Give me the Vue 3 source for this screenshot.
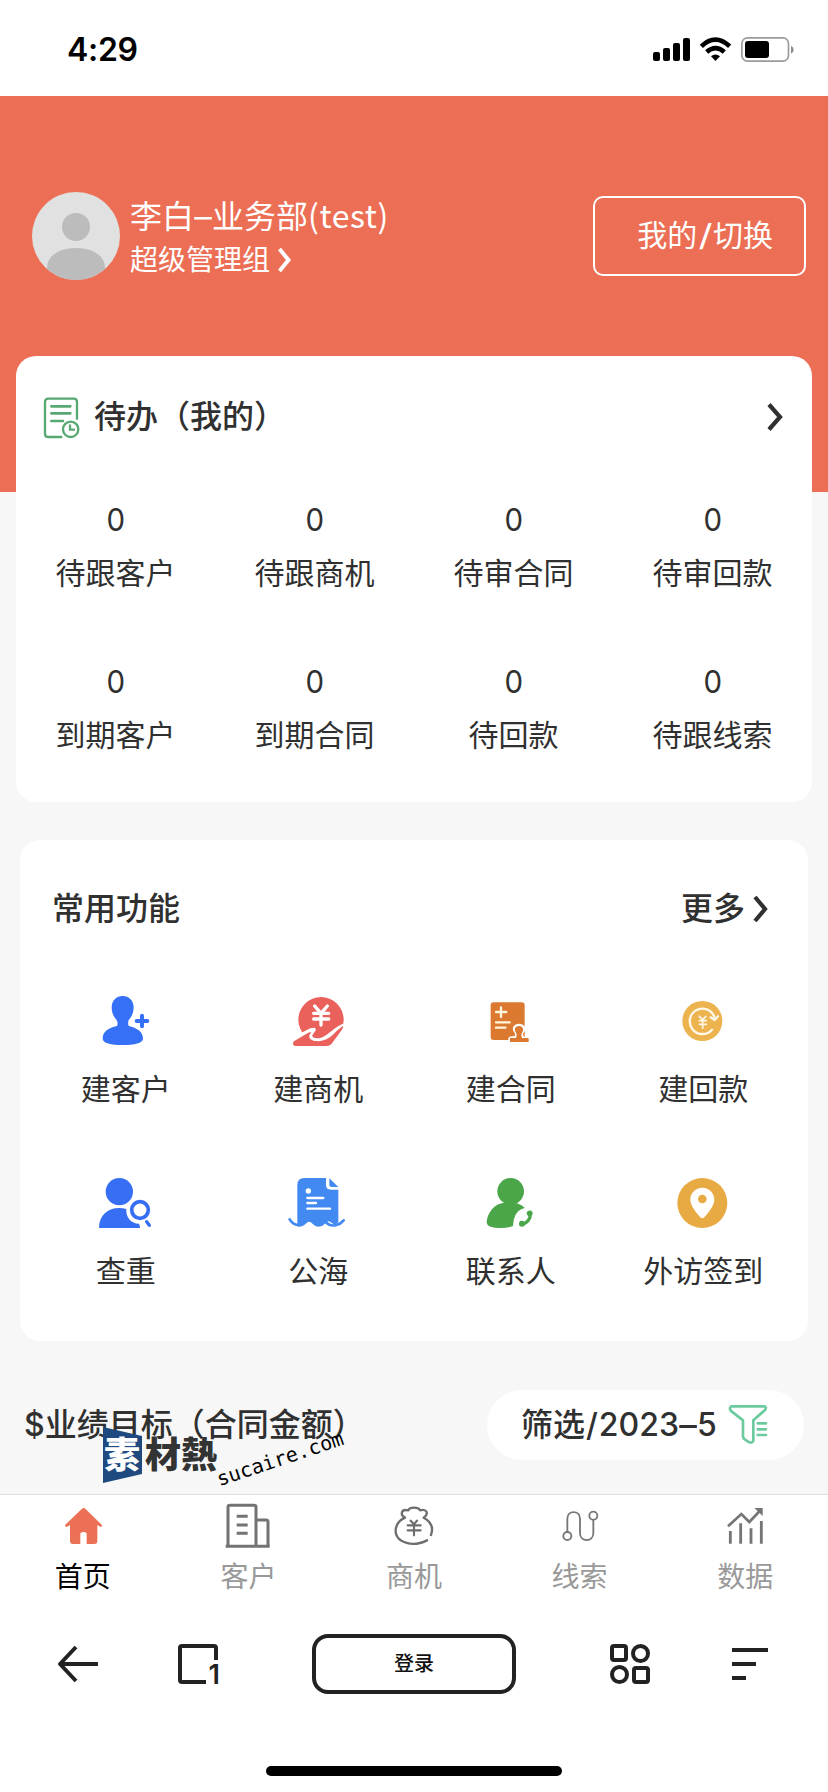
<script setup>
const todos = [
  { count: 0, label: '待跟客户' },
  { count: 0, label: '待跟商机' },
  { count: 0, label: '待审合同' },
  { count: 0, label: '待审回款' },
  { count: 0, label: '到期客户' },
  { count: 0, label: '到期合同' },
  { count: 0, label: '待回款' },
  { count: 0, label: '待跟线索' },
]
</script>

<template>
  <div class="screen">
    <div class="status">
      <span class="time">4:29</span>
      <svg class="status-icons" viewBox="0 0 510 180">
        <rect x="39" y="96" width="21" height="27" rx="6" />
        <rect x="69" y="84" width="21" height="39" rx="6" />
        <rect x="99" y="69" width="21" height="54" rx="6" />
        <rect x="129" y="54" width="21" height="69" rx="6" />
        <g fill="none" stroke="#000" stroke-width="14">
          <path d="M184 79Q226 39 269 79" />
          <path d="M200 96Q226 73 253 96" />
        </g>
        <path d="M213 109Q226 98 240 109L226.500 123Z" />
        <rect x="305.500" y="53.500" width="140" height="70" rx="17" fill="none" stroke="#9b9b9b" stroke-width="5" />
        <rect x="315" y="63" width="72" height="51" rx="9" />
        <path d="M453 77Q461 81 461 89T453 101Z" fill="#8c8c8c" />
      </svg>
    </div>

    <header class="header">
      <svg class="avatar" viewBox="0 0 88 88">
        <defs><clipPath id="avatar-clip"><circle cx="44" cy="44" r="44" /></clipPath></defs>
        <g clip-path="url(#avatar-clip)">
          <rect width="88" height="88" fill="#e1e1e1" />
          <circle cx="44" cy="35" r="14" fill="#bcbcbc" />
          <path d="M15 90V76C15 64 27 56 44 56S73 64 73 76V90Z" fill="#bcbcbc" />
        </g>
      </svg>
      <div class="who">
        <div class="name">李白<span class="dash">–</span>业务部<span class="latin">(test)</span></div>
        <div class="role">
          超级管理组
          <svg class="chev-role" viewBox="0 0 14 26"><path d="M2.500 2L11.500 13L2.500 24" /></svg>
        </div>
      </div>
      <div class="switch">我的<span class="slash">/</span>切换</div>
    </header>

    <section class="card todo">
      <div class="todo-head">
        <svg class="todo-icon" viewBox="120 156 132 144" fill="none" stroke="#58a873" stroke-width="7" stroke-linecap="round">
          <path d="M231 233V183Q231 173 221 173H145Q135 173 135 183V278Q135 288 145 288H184" />
          <path d="M154 196H211M154 217H211M154 240H189" stroke-width="8" />
          <circle cx="212" cy="265" r="23" />
          <path d="M210 253V266H222" />
        </svg>
        <span class="title">待办（我的）</span>
        <svg class="chev-todo" viewBox="0 0 18 30"><path d="M3 2.500L14 15L3 27.500" /></svg>
      </div>
      <div class="todo-grid">
        <div v-for="item in todos" :key="item.label" class="todo-cell">
          <span class="num">{{ item.count }}</span>
          <span class="label">{{ item.label }}</span>
        </div>
      </div>
    </section>

    <section class="card funcs">
      <div class="funcs-head">
        <span class="title">常用功能</span>
        <span class="title more">更多</span>
        <svg class="chev-more" viewBox="0 0 16 28"><path d="M3 2L13 14L3 26" /></svg>
      </div>
      <div class="func-grid">
        <div class="func">
          <svg viewBox="99 57 192 192" fill="#3670f6">
            <path d="M188 78C207 78 221 92 221 112C221 128 216 140 206 150Q203 161 206 168C230 174 249 184 249 206C249 219 224 225 188 225S128 219 128 206C128 184 146 174 171 168Q175 160 170 150C160 140 155 128 155 112C155 92 169 78 188 78Z" />
            <path d="M246 137V169M230 153H262" stroke="#3670f6" stroke-width="12" stroke-linecap="round" />
          </svg>
          <span class="label">建客户</span>
        </div>
        <div class="func">
          <svg viewBox="677 57 192 192" fill="#ea615b">
            <circle cx="782" cy="149" r="68" />
            <path d="M694 203L750 175Q769 169 766 181L756 196Q754 206 777 205C803 201 824 164 858 159V232H694Z" fill="#fff" />
            <path d="M702 213L744 188Q757 183 750 191C742 199 749 211 765 213C793 216 812 202 829 183Q840 173 848 168Q850 171 844 180L814 221Q808 228 799 228H706Q698 228 698 220Q698 216 702 213Z" />
            <path d="M763 108L782 130L801 108M782 130V165M760 130H805M760 147H805" fill="none" stroke="#fff" stroke-width="10" stroke-linecap="round" />
          </svg>
          <span class="label">建商机</span>
        </div>
        <div class="func">
          <svg viewBox="115 57 192 192" fill="#dc7930">
            <rect x="153" y="97" width="102" height="113" rx="9" />
            <path d="M184 112V141M169 126H200M169 157H210M169 173H197" stroke="#fff4dc" stroke-width="7" stroke-linecap="round" />
            <path d="M206 222V205Q208 199 216 199H224Q229 193 223 186C214 173 224 161 238 161S264 173 253 187Q247 193 253 200H272V222Z" fill="#fff" />
            <path d="M211 204H229Q234 195 229 188C222 178 227 168 238 168S254 178 247 188Q242 195 247 204H263Q267 204 267 208V216H211Z" />
          </svg>
          <span class="label">建合同</span>
        </div>
        <div class="func">
          <svg viewBox="692 57 192 192">
            <circle cx="786" cy="153" r="60" fill="#edb34f" />
            <g fill="none" stroke="#fff8e8" stroke-width="7" stroke-linecap="round" stroke-linejoin="round">
              <path d="M815 179A38 38 0 1 1 822 141" />
              <path d="M811 142L823 150L833 139" />
              <path d="M777 139L787 149L797 139M787 149V175M777 152H798M777 163H798" stroke-width="5" />
            </g>
          </svg>
          <span class="label">建回款</span>
        </div>
        <div class="func">
          <svg viewBox="99 63 192 192" fill="#376ff4">
            <circle cx="178" cy="125" r="41" />
            <path d="M117 234C117 195 144 174 177 174Q189 174 199 177C197 202 213 221 237 221Q240 227 240 234Z" />
            <circle cx="240" cy="180" r="25" fill="none" stroke="#376ff4" stroke-width="11" />
            <path d="M260 215L268 226" stroke="#376ff4" stroke-width="10" stroke-linecap="round" />
          </svg>
          <span class="label">查重</span>
        </div>
        <div class="func">
          <svg viewBox="677 63 192 192" fill="#4289f1">
            <path d="M711 216V105Q711 84 732 84H797V105Q797 119 812 119H834V216Q827 226 818 221L809 215Q803 212 797 219Q786 230 775 230T754 219Q746 211 739 219Q729 230 716 230L711 229Z" />
            <path d="M807 85L834 111H814Q807 111 807 104Z" />
            <path d="M688 208Q698 225 716 225M798 218Q810 230 828 225Q841 222 850 211" fill="none" stroke="#4289f1" stroke-width="8" stroke-linecap="round" />
            <circle cx="744" cy="123" r="8" fill="#fff" />
            <path d="M741 144H789M741 159H767M741 176H809" stroke="#fff" stroke-width="7" stroke-linecap="round" />
          </svg>
          <span class="label">公海</span>
        </div>
        <div class="func">
          <svg viewBox="115 63 192 192" fill="#4ba64a">
            <circle cx="213" cy="124" r="40" />
            <path d="M193 158Q213 151 232 160Q248 165 256 174Q222 181 220 228Q204 235 177 234Q142 232 141 218C142 187 165 161 193 158Z" />
            <path d="M248 223C262 220 273 206 272 191" fill="none" stroke="#4ba64a" stroke-width="10" />
            <ellipse cx="270" cy="190" rx="9" ry="8" transform="rotate(-20 270 190)" />
            <ellipse cx="247" cy="221" rx="9" ry="9" />
          </svg>
          <span class="label">联系人</span>
        </div>
        <div class="func">
          <svg viewBox="692 63 192 192">
            <circle cx="786" cy="159" r="75" fill="#e8aa43" />
            <path d="M786 113C766 113 750 129 750 149C750 168 771 191 780 202Q786 208 792 202C801 191 822 168 822 149C822 129 806 113 786 113Z" fill="#fff" />
            <circle cx="786" cy="147" r="13" fill="#e8aa43" />
          </svg>
          <span class="label">外访签到</span>
        </div>
      </div>
    </section>

    <div class="goal">
      <span class="title goal-title">$业绩目标（合同金额）</span>
      <div class="filter">
        <span class="title">筛选<span class="slash">/</span>2023<span class="dash">–</span>5</span>
        <svg class="funnel" viewBox="936 96 132 144" fill="none" stroke="#6ccb9e" stroke-width="8" stroke-linecap="round" stroke-linejoin="round">
          <path d="M952 112H1051Q1058 114 1054 122L1018 154V215Q1015 223 1006 220L992 211Q987 208 987 202V154L950 125Q945 116 952 112Z" />
          <path d="M1031 163H1056M1031 181H1056M1031 198H1056" />
        </svg>
      </div>
    </div>

    <nav class="tabs">
      <div class="tab active">
        <svg viewBox="158 18 180 180" fill="#ec7056">
          <path d="M245 56Q250 52 255 56L304 104Q307 110 301 111L291 105V153Q291 162 282 162H259V133Q259 126 250 126Q240 126 240 133V162H218Q209 162 209 153V105L199 111Q192 110 195 104Z" />
        </svg>
        <span>首页</span>
      </div>
      <div class="tab">
        <svg viewBox="655 18 180 180" fill="none" stroke="#737373" stroke-width="9">
          <path d="M685 168V51Q685 46 691 46H763Q769 46 769 51V168M769 90H800Q805 90 805 96V168" />
          <path d="M678 169H810M711 79H744M711 105H744M711 130H744" />
        </svg>
        <span>客户</span>
      </div>
      <div class="tab">
        <svg viewBox="12 18 180 180" fill="none" stroke="#6e6e6e" stroke-width="7" stroke-linecap="round" stroke-linejoin="round">
          <path d="M153 135C162 110 151 94 131 83Q142 75 140 66Q135 57 120 61Q116 53 102 53T85 61Q69 57 66 67Q63 77 75 83C44 97 38 132 61 150Q97 173 141 151" />
          <path d="M92 92L102 103L111 92M102 103V136M83 106H122M83 121H122" stroke-width="6.500" />
        </svg>
        <span>商机</span>
      </div>
      <div class="tab">
        <svg viewBox="509 18 180 180" fill="none" stroke="#777" stroke-width="5.500">
          <path d="M561 126V86C561 60 599 60 599 86V130C599 157 639 157 639 130V90" />
          <circle cx="561" cy="138" r="12" />
          <circle cx="639" cy="77" r="12" />
        </svg>
        <span>线索</span>
      </div>
      <div class="tab">
        <svg viewBox="904 18 180 180" fill="none" stroke="#757575" stroke-width="8.500">
          <path d="M950 123V161M981 100V161M1012 115V161M1043 93V161" />
          <path d="M943 109L983 72L1007 96L1041 60" stroke-width="8" />
          <path d="M1022 54H1047V78Z" fill="#757575" stroke="none" />
        </svg>
        <span>数据</span>
      </div>
    </nav>

    <div class="browser">
      <svg class="back" viewBox="0 0 40 40" fill="none" stroke="#222" stroke-width="4"><path d="M40 20H2M18 3L2 20L18 37" stroke-linejoin="round" /></svg>
      <svg class="pages" viewBox="0 0 40 40" fill="none" stroke="#222" stroke-width="4">
        <path d="M38 16V4Q38 2 36 2H4Q2 2 2 4V36Q2 38 4 38H28" />
        <text x="42" y="40" text-anchor="end" class="page-count">1</text>
      </svg>
      <div class="login">登录</div>
      <svg class="apps" viewBox="0 0 40 40" fill="none" stroke="#222" stroke-width="4">
        <rect x="2" y="2" width="14" height="14" rx="2" /><circle cx="30.500" cy="9.500" r="7.500" />
        <circle cx="9.500" cy="30.500" r="7.500" /><rect x="24" y="24" width="14" height="14" rx="2" />
      </svg>
      <svg class="menu" viewBox="0 0 36 40" stroke="#222" stroke-width="4"><path d="M0 6H36M0 20H24M0 34H14" /></svg>
    </div>
    <div class="home-bar"></div>

    <div class="mark">
      <svg class="mark-bg" viewBox="0 0 39 56"><path d="M0 0L39 9V47L0 56Z" fill="#1f4a80" /></svg>
      <span class="mark-a">素</span>
      <span class="mark-b">材熱</span>
      <span class="mark-url">sucaire.com</span>
    </div>
  </div>
</template>

<style>
body { background: #fff; }
</style>

<style scoped>
* { box-sizing: border-box; }
svg { display: block; flex: none; overflow: visible; }
.screen {
  position: relative;
  width: 828px;
  height: 1792px;
  overflow: hidden;
  background: #f7f7f7;
  color: #303030;
  font-family: Inter, "Noto Sans CJK SC", sans-serif;
  display: flex;
  flex-direction: column;
}
.status { height: 96px; flex: none; background: #fff; display: flex; justify-content: space-between; padding: 20px 18px 0 67px; color: #000; }
.time { font-size: 32px; font-weight: 600; line-height: 60px; letter-spacing: -0.3px; }
.status-icons { width: 170px; height: 60px; }
.header { height: 396px; flex: none; background: #ec6f55; color: #fff; display: flex; align-items: flex-start; padding: 96px 22px 0 32px; }
.avatar { width: 88px; height: 88px; }
.who { margin: -2px 0 0 10px; flex: 1; white-space: nowrap; }
.name { font-size: 32px; line-height: 48px; }
.dash { display: inline-block; transform: scaleX(1.1); margin: 0 1px; }
.latin { font-family: "Noto Sans CJK SC", sans-serif; letter-spacing: 0.6px; }
.slash { margin: 0 1px; }
.role { font-size: 28px; line-height: 38px; display: flex; align-items: center; gap: 7px; }
.chev-role { width: 14px; height: 26px; }
.chev-role path { fill: none; stroke: #fff; stroke-width: 4; }
.switch { width: 213px; height: 80px; margin-top: 4px; border: 2px solid #fff; border-radius: 10px; font-size: 30px; line-height: 75px; text-align: right; padding-right: 31px; }
.switch .slash { display: inline-block; margin: 0 2.5px; transform: scaleX(1.3); }
.card { background: #fff; border-radius: 20px; flex: none; }
.todo { width: 796px; height: 446px; margin: -136px 16px 0; }
.todo-head { height: 121px; display: flex; align-items: center; padding: 0 28px 0 24px; }
.todo-icon { width: 44px; height: 48px; }
.title { font-size: 32px; font-weight: 500; line-height: 44px; white-space: nowrap; }
.todo-head .title { margin-left: 10px; flex: 1; }
.chev-todo { width: 18px; height: 30px; }
.chev-todo path, .chev-more path { fill: none; stroke: #303030; stroke-width: 4.2; }
.todo-grid { display: grid; grid-template-columns: repeat(4, 1fr); grid-auto-rows: 162px; padding-top: 21px; }
.todo-cell { display: flex; flex-direction: column; align-items: center; }
.num { font-size: 31px; font-weight: 400; line-height: 44px; transform: scaleX(0.95); }
.label { font-size: 30px; line-height: 44px; }
.todo-cell .label { margin-top: 9px; }
.funcs { width: 788px; height: 501px; margin: 38px 20px 0; padding: 0 9px; }
.funcs-head { height: 138px; display: flex; align-items: center; padding: 0 31px 0 23px; }
.more { margin-left: auto; }
.chev-more { width: 16px; height: 28px; margin-left: 7px; }
.func-grid { display: grid; grid-template-columns: repeat(4, 1fr); grid-auto-rows: 182px; padding-top: 11px; }
.func { display: flex; flex-direction: column; align-items: center; }
.func svg { width: 64px; height: 64px; }
.func .label { margin-top: 14px; padding-left: 1px; }
.goal { height: 153px; flex: none; display: flex; justify-content: space-between; align-items: flex-start; padding: 49px 24px 0; }
.goal-title { line-height: 70px; }
.filter { width: 317px; height: 70px; border-radius: 35px; background: #fff; display: flex; align-items: center; justify-content: space-between; padding: 0 34px 0 34px; }
.funnel { width: 44px; height: 48px; }
.tabs { height: 118px; flex: none; background: #fff; border-top: 1px solid #dedede; display: grid; grid-template-columns: repeat(5, 1fr); }
.tab { display: flex; flex-direction: column; align-items: center; font-size: 28px; line-height: 42px; color: #999; }
.tab svg { width: 60px; height: 60px; margin-top: 1px; }
.active { color: #000; }
.browser { height: 104px; flex: none; background: #fff; display: flex; align-items: center; padding-left: 58px; }
.back, .pages, .apps { width: 40px; height: 40px; }
.pages { margin-left: 80px; }
.page-count { font-family: Inter, sans-serif; font-size: 27px; font-weight: 600; fill: #222; stroke: none; }
.login { width: 204px; height: 60px; margin: 0 94px; border: 4px solid #222; border-radius: 16px; color: #111; text-align: center; font-size: 20px; font-weight: 500; line-height: 52px; }
.menu { width: 36px; height: 40px; margin-left: 82px; }
.home-bar { height: 76px; flex: none; background: #fff; display: flow-root; }
.home-bar::after { content: ""; display: block; width: 296px; height: 10px; margin: 50px auto 0; border-radius: 5px; background: #000; }
.mark { position: absolute; left: 103px; top: 1427px; width: 245px; height: 66px; white-space: nowrap; }
.mark-bg { position: absolute; left: 0; top: 0; width: 39px; height: 56px; }
.mark-a, .mark-b { position: absolute; top: 5px; font-size: 36px; font-weight: 900; line-height: 40px; font-family: "Noto Sans CJK TC", sans-serif; }
.mark-a { left: 1px; color: #fff; }
.mark-b { left: 42px; color: #333; }
.mark-url { position: absolute; left: 118px; top: 40px; font-family: "DejaVu Sans Mono", monospace; font-size: 20px; line-height: 24px; color: #000; transform: rotate(-18.5deg); transform-origin: 0 100%; }
</style>
